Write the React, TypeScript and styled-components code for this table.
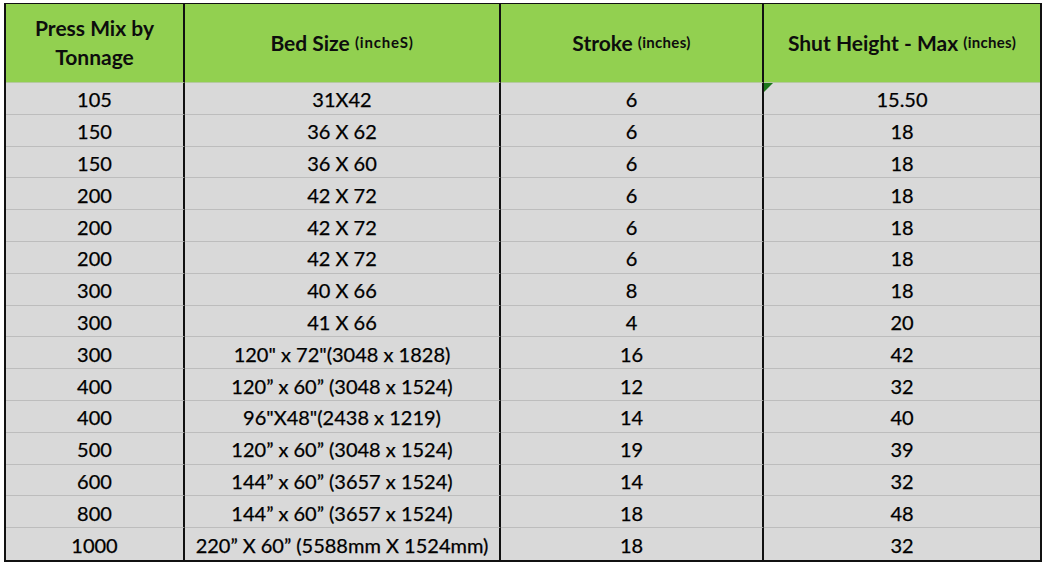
import React from "react";
import styled, { createGlobalStyle } from "styled-components";

const Global = createGlobalStyle`
  html, body { margin: 0; padding: 0; background: #ffffff; }
  body { font-family: Lato, "Liberation Sans", sans-serif; }
`;

const Page = styled.div`
  padding: 3px 4px 0 4px;
`;

const Table = styled.div`
  width: 1038px;
  height: 559px;
  box-sizing: border-box;
  border-top: 1px solid #111;
  border-left: 2px solid #111;
  border-right: 2px solid #111;
  border-bottom: 2px solid #111;
  display: grid;
  grid-template-columns: 179px 316px 263px 276px;
  grid-template-rows: 79px repeat(15, 1fr);
  font-family: Lato, "Liberation Sans", sans-serif;
  color: #000;
`;

const HeadCell = styled.div<{ $last?: boolean }>`
  background: #92d050;
  display: flex;
  align-items: center;
  justify-content: center;
  text-align: center;
  font-weight: 700;
  font-size: 21px;
  line-height: 29px;
  color: #0d0d0d;
  border-right: ${(p) => (p.$last ? "none" : "2px solid #111")};
  border-bottom: 1px solid #b6c9a0;
  box-sizing: border-box;
  padding-bottom: 2px;
`;

const Unit = styled.span<{ $wide?: boolean }>`
  font-size: 15px;
  font-weight: 700;
  letter-spacing: ${(p) => (p.$wide ? "0.8px" : "0.3px")};
`;

const Cell = styled.div<{ $last?: boolean; $lastRow?: boolean }>`
  position: relative;
  background: #d9d9d9;
  display: flex;
  align-items: center;
  justify-content: center;
  font-size: 20px;
  white-space: nowrap;
  -webkit-text-stroke: 0.25px #000;
  border-right: ${(p) => (p.$last ? "none" : "2px solid #111")};
  border-bottom: ${(p) => (p.$lastRow ? "none" : "1px solid #bdbdbd")};
  box-sizing: border-box;
  padding-top: 2px;
`;

const Marker = styled.span`
  position: absolute;
  left: 0;
  top: 0;
  width: 0;
  height: 0;
  border-top: 9px solid #1a761a;
  border-right: 9px solid transparent;
`;

const rows: [string, string, string, string][] = [
  ["105", "31X42", "6", "15.50"],
  ["150", "36 X 62", "6", "18"],
  ["150", "36 X 60", "6", "18"],
  ["200", "42 X 72", "6", "18"],
  ["200", "42 X 72", "6", "18"],
  ["200", "42 X 72", "6", "18"],
  ["300", "40 X 66", "8", "18"],
  ["300", "41 X 66", "4", "20"],
  ["300", "120\" x 72\"(3048 x 1828)", "16", "42"],
  ["400", "120\u201d x 60\u201d (3048 x 1524)", "12", "32"],
  ["400", "96\"X48\"(2438 x 1219)", "14", "40"],
  ["500", "120\u201d x 60\u201d (3048 x 1524)", "19", "39"],
  ["600", "144\u201d x 60\u201d (3657 x 1524)", "14", "32"],
  ["800", "144\u201d x 60\u201d (3657 x 1524)", "18", "48"],
  ["1000", "220\u201d X 60\u201d (5588mm X 1524mm)", "18", "32"],
];

export default function App() {
  return (
    <Page>
      <Global />
      <Table>
        <HeadCell>
          Press Mix by
          <br />
          Tonnage
        </HeadCell>
        <HeadCell>
          Bed Size&nbsp;<Unit $wide>(incheS)</Unit>
        </HeadCell>
        <HeadCell>
          Stroke&nbsp;<Unit>(inches)</Unit>
        </HeadCell>
        <HeadCell $last>
          Shut Height - Max&nbsp;<Unit>(inches)</Unit>
        </HeadCell>
        {rows.map((r, i) =>
          r.map((v, j) => (
            <Cell key={`${i}-${j}`} $last={j === 3} $lastRow={i === rows.length - 1}>
              {i === 0 && j === 3 && <Marker />}
              {v}
            </Cell>
          ))
        )}
      </Table>
    </Page>
  );
}
